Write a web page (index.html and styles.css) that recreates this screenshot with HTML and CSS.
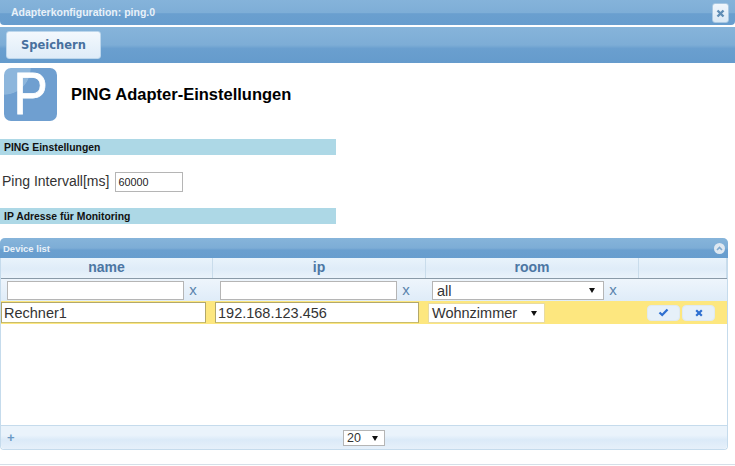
FILE: index.html
```html
<!DOCTYPE html>
<html lang="en">
<head>
    <meta charset="UTF-8">
    <meta name="viewport" content="width=device-width, initial-scale=1.0">
    <title>Adapterkonfiguration: ping.0</title>
    <link rel="stylesheet" href="styles.css">
</head>
<body>
    <div class="titlebar">
        <span class="title-text">Adapterkonfiguration: ping.0</span>
        <button class="close-btn">
            <svg width="9" height="9" viewBox="0 0 9 9"><path d="M1.5 1.5L7.5 7.5M7.5 1.5L1.5 7.5" stroke="#5f8db5" stroke-width="2.4"/></svg>
        </button>
    </div>
    <div class="toolbar">
        <button class="save-btn">Speichern</button>
    </div>

    <div class="heading">
        <div class="logo"><span class="logo-letter">P</span></div>
        <h1>PING Adapter-Einstellungen</h1>
    </div>

    <div class="section">PING Einstellungen</div>
    <div class="field">
        <label>Ping Intervall[ms]</label>
        <input type="text" class="interval" value="60000">
    </div>
    <div class="section">IP Adresse für Monitoring</div>

    <div class="grid">
        <div class="grid-caption">
            <span>Device list</span>
            <span class="collapse"><svg width="7" height="5" viewBox="0 0 7 5"><path d="M1 4L3.5 1.5L6 4" fill="none" stroke="#7fa9cf" stroke-width="1.6"/></svg></span>
        </div>
        <div class="grid-row grid-head">
            <div class="cell">name</div>
            <div class="cell">ip</div>
            <div class="cell">room</div>
            <div class="cell"></div>
        </div>
        <div class="grid-row grid-filter">
            <div class="cell"><input type="text" class="filter-input"><span class="clear">x</span></div>
            <div class="cell"><input type="text" class="filter-input"><span class="clear">x</span></div>
            <div class="cell">
                <div class="select filter-select">all<span class="arrow"></span></div>
                <span class="clear">x</span>
            </div>
            <div class="cell"></div>
        </div>
        <div class="grid-row grid-edit">
            <div class="cell"><input type="text" class="edit-input" value="Rechner1"></div>
            <div class="cell"><input type="text" class="edit-input" value="192.168.123.456"></div>
            <div class="cell"><div class="select edit-select">Wohnzimmer<span class="arrow"></span></div></div>
            <div class="cell actions">
                <button class="row-btn">
                    <svg width="11" height="9" viewBox="0 0 11 9"><path d="M1.5 4.5L4.2 7L9.5 1.5" fill="none" stroke="#2e6fd0" stroke-width="2.3"/></svg>
                </button>
                <button class="row-btn">
                    <svg width="8" height="8" viewBox="0 0 8 8"><path d="M1.2 1.2L6.8 6.8M6.8 1.2L1.2 6.8" stroke="#2e6fd0" stroke-width="2.2"/></svg>
                </button>
            </div>
        </div>
        <div class="grid-body"></div>
        <div class="grid-footer">
            <span class="add">+</span>
            <div class="select page-select">20<span class="arrow"></span></div>
        </div>
    </div>
    <div class="bottom-line"></div>
</body>
</html>
```

FILE: styles.css
```css
html, body {
    height: 466px;
    overflow: hidden;
}
body {
    margin: 0;
    font-family: "Liberation Sans", Arial, sans-serif;
    background: #fff;
    color: #222;
}
button {
    font-family: inherit;
    cursor: pointer;
}
input {
    font-family: inherit;
    box-sizing: border-box;
    margin: 0;
}

.titlebar {
    height: 25px;
    box-sizing: border-box;
    display: flex;
    align-items: center;
    justify-content: space-between;
    padding: 0 6px 2px 11px;
    border-radius: 0 0 4px 4px;
    background: linear-gradient(#85b3da 0, #7eaed7 50%, #6a9fcf 55%, #679dce 100%);
}
.title-text {
    color: #e8f1f9;
    font-size: 10.5px;
    font-weight: bold;
}
.close-btn {
    width: 17px;
    height: 20px;
    margin-top: 3px;
    padding: 0;
    border: 1px solid #a9c8e2;
    border-radius: 3px;
    background: linear-gradient(#f0f6fc, #d9e8f5);
    display: flex;
    align-items: center;
    justify-content: center;
}

.toolbar {
    height: 36px;
    margin-top: 2px;
    box-sizing: border-box;
    padding: 4px 6px;
    background: linear-gradient(#86b4da 0, #7dadd6 50%, #6a9fcf 60%, #659bcc 100%);
}
.save-btn {
    height: 28px;
    width: 95px;
    padding: 0;
    border: 1px solid #bcd6ec;
    border-radius: 3px;
    background: linear-gradient(#f3f8fd, #dfecf8);
    color: #48709e;
    font-family: "DejaVu Sans", Verdana, sans-serif;
    font-size: 11.5px;
    font-weight: bold;
}

.heading {
    display: flex;
    align-items: center;
    gap: 14px;
    padding: 5px 0 0 4px;
    height: 53px;
}
.logo {
    width: 53px;
    height: 53px;
    border-radius: 7px;
    background: radial-gradient(circle at 0 0, #8db6dc 0, #8db6dc 35%, #6f9fd0 36%, #6f9fd0 100%);
    color: #fff;
    font-size: 59px;
    line-height: 53px;
    text-align: center;
}
.logo-letter {
    display: inline-block;
    transform: scaleX(0.87);
    -webkit-text-stroke: 0.8px #fff;
}
.heading h1 {
    margin: 0;
    font-size: 16.5px;
    font-weight: bold;
    color: #000;
}

.section {
    width: 336px;
    height: 16px;
    line-height: 17px;
    box-sizing: border-box;
    padding-left: 4px;
    background: #add8e6;
    color: #111;
    font-size: 10.4px;
    font-weight: bold;
}
.heading + .section {
    margin-top: 18px;
}
.field {
    display: flex;
    align-items: center;
    gap: 6px;
    height: 53px;
    box-sizing: border-box;
    padding: 0 0 1px 2px;
    font-size: 14px;
    color: #333;
}
.interval {
    width: 68px;
    height: 20px;
    padding: 1px 2px;
    margin-top: 1px;
    border: 1px solid #b5b5b5;
    font-size: 10.8px;
    color: #222;
}

.grid {
    width: 728px;
    height: 212px;
    margin-top: 14px;
    box-sizing: border-box;
    display: flex;
    flex-direction: column;
    border: 1px solid #c5dbec;
    border-top: none;
    border-radius: 5px 5px 4px 4px;
}
.grid-caption {
    height: 20px;
    margin: 0 -1px;
    flex: none;
    display: flex;
    align-items: center;
    justify-content: space-between;
    padding: 0 3px;
    border-radius: 5px 5px 0 0;
    background: linear-gradient(#86b4da 0, #7dadd6 50%, #6a9fcf 60%, #679dce 100%);
    color: #e8f1f9;
    font-size: 9.5px;
    font-weight: bold;
}
.collapse {
    width: 11px;
    height: 11px;
    border-radius: 50%;
    background: #dfe8f1;
    display: flex;
    align-items: center;
    justify-content: center;
}

.grid-row {
    display: grid;
    grid-template-columns: 212px 213px 213px 1fr;
    flex: none;
}
.grid-head {
    height: 20px;
    border-bottom: 1px solid #8a9aa8;
    background: linear-gradient(#e9f3fb, #dfecf8 55%, #eaf3fb);
    color: #4c76a3;
    font-size: 14px;
    font-weight: bold;
}
.grid-head .cell {
    text-align: center;
    line-height: 19px;
    border-right: 1px solid #c9dceb;
}
.grid-filter {
    height: 22px;
    background: linear-gradient(#eef5fc, #dfecf8);
}
.grid-filter .cell {
    display: flex;
    align-items: center;
    padding-left: 6px;
}
.grid-filter .cell:nth-child(2) {
    padding-left: 7px;
}
.filter-input {
    width: 177px;
    height: 19px;
    border: 1px solid #b5b5b5;
    background: #fff;
}
.clear {
    color: #5a84ad;
    font-size: 15px;
    margin-left: 4px;
    width: 10px;
    text-align: center;
    line-height: 12px;
}
.select {
    position: relative;
    box-sizing: border-box;
    background: #fff;
    border: 1px solid #b5b5b5;
    color: #333;
    font-size: 14.5px;
    padding-left: 3px;
}
.arrow {
    position: absolute;
    top: 50%;
    margin-top: -2px;
    width: 0;
    height: 0;
    border-left: 3px solid transparent;
    border-right: 3px solid transparent;
    border-top: 5px solid #111;
}
.filter-select {
    width: 172px;
    height: 19px;
    line-height: 18px;
    padding-left: 4px;
}
.filter-select .arrow {
    right: 8px;
}
.grid-edit {
    height: 23px;
    background: #fde77f;
}
.grid-edit .cell {
    display: flex;
    align-items: center;
    padding-left: 2px;
}
.grid-edit .cell:first-child {
    padding-left: 0;
}
.edit-input {
    width: 204px;
    height: 21px;
    padding: 0 2px;
    border: 1px solid #b3a86a;
    border-bottom-color: #c9bd6b;
    font-size: 14.5px;
    color: #333;
}
.grid-edit .cell:first-child .edit-input {
    width: 205px;
}
.edit-select {
    width: 117px;
    height: 20px;
    line-height: 18px;
    border-color: #e8dba0;
}
.edit-select .arrow {
    right: 7px;
}
.actions {
    gap: 2px;
    padding-left: 8px !important;
}
.row-btn {
    width: 33px;
    height: 16px;
    padding: 0;
    border: 1px solid #dfe9f0;
    border-radius: 4px;
    background: #e6f0f9;
    display: flex;
    align-items: center;
    justify-content: center;
}

.grid-body {
    flex: 1;
    background: #fff;
}
.grid-footer {
    position: relative;
    flex: none;
    height: 24px;
    box-sizing: border-box;
    display: flex;
    align-items: center;
    justify-content: center;
    border-top: 1px solid #c5dbec;
    background: linear-gradient(#eaf3fb, #eaf3fb 40%, #dbeaf8 60%, #e6f0fa);
    border-radius: 0 0 4px 4px;
}
.add {
    position: absolute;
    left: 6px;
    top: 5px;
    color: #6c9ac4;
    font-size: 13px;
    font-weight: bold;
    line-height: 14px;
}
.page-select {
    width: 42px;
    height: 16px;
    line-height: 14px;
    font-size: 12.5px;
}
.page-select .arrow {
    right: 6px;
}
.bottom-line {
    margin-top: 14px;
    height: 1px;
    background: #d5dfe8;
}
```
